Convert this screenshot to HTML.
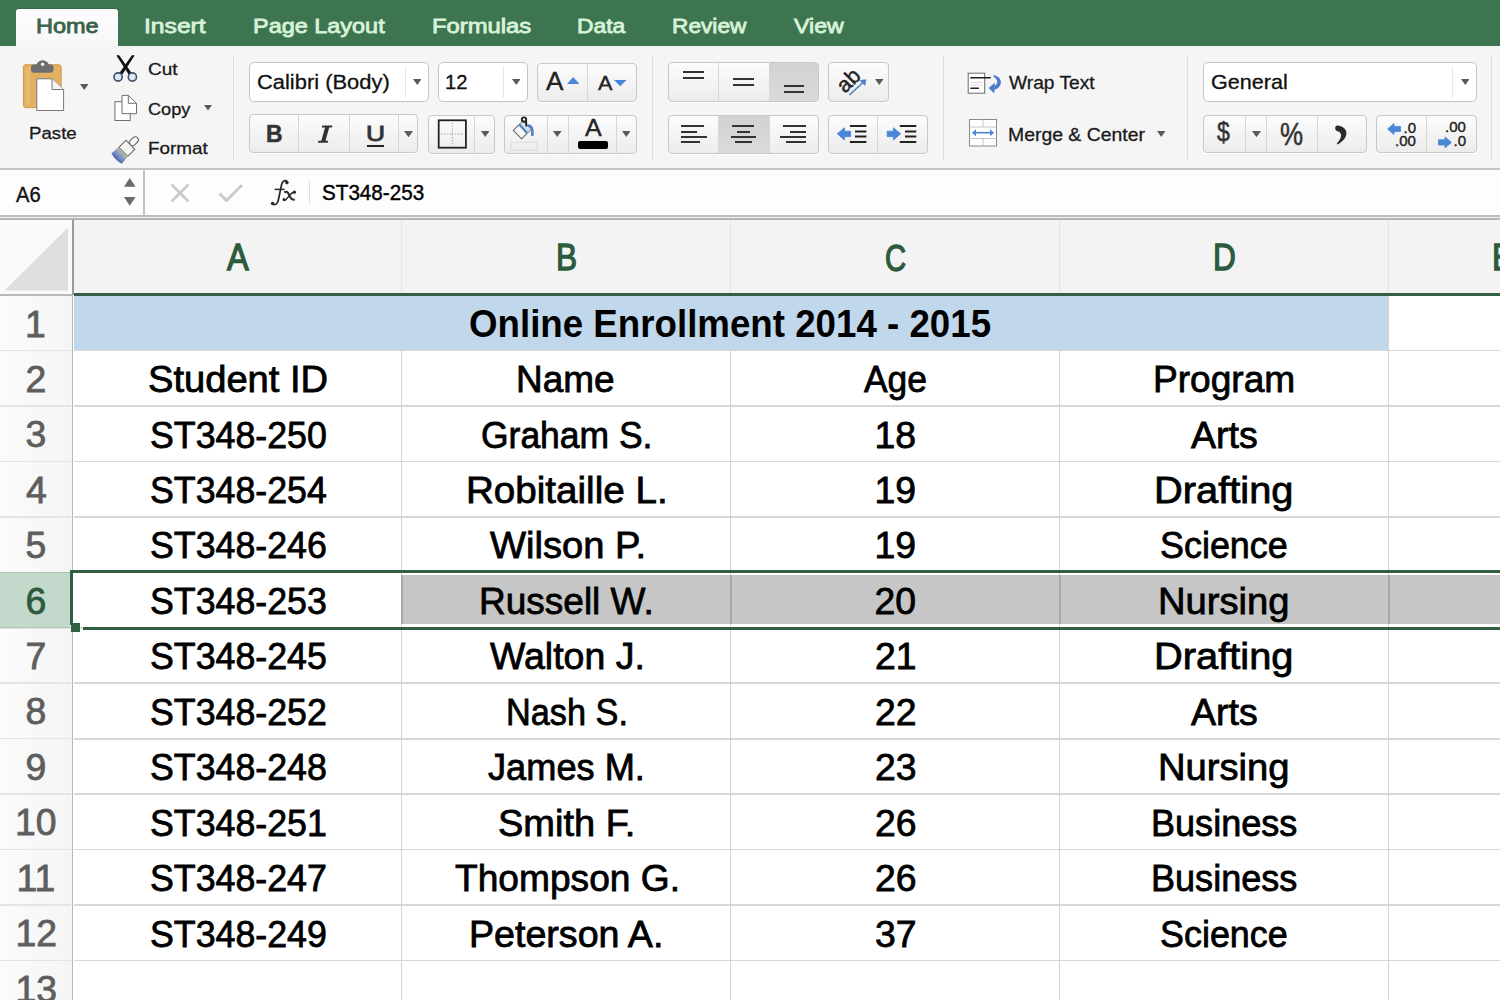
<!DOCTYPE html>
<html><head><meta charset="utf-8"><title>Excel</title>
<style>
html,body{margin:0;padding:0;}
body{width:1500px;height:1000px;position:relative;overflow:hidden;background:#fff;font-family:"Liberation Sans",sans-serif;}
.t{position:absolute;white-space:nowrap;line-height:1;transform-origin:0 0;}
</style></head><body>
<div style="position:absolute;left:0px;top:0px;width:1500px;height:46px;background:#3d7550"></div>
<div style="position:absolute;left:16px;top:8.5px;width:102px;height:39px;background:linear-gradient(#fefefe,#f6f6f6);border-radius:3px 3px 0 0;box-shadow:0 -0.5px 0 #2f5e3f"></div>
<div class="t" style="left:35.85px;top:16.35px;font-size:20.49px;font-weight:normal;color:#3a6148;transform:scaleX(1.1472);-webkit-text-stroke:0.8px #3a6148">Home</div>
<div class="t" style="left:144.10px;top:16.15px;font-size:20.49px;font-weight:normal;color:#d8f2d8;transform:scaleX(1.2039);-webkit-text-stroke:0.8px #d8f2d8">Insert</div>
<div class="t" style="left:253.36px;top:16.15px;font-size:20.49px;font-weight:normal;color:#d8f2d8;transform:scaleX(1.1447);-webkit-text-stroke:0.8px #d8f2d8">Page Layout</div>
<div class="t" style="left:431.84px;top:16.15px;font-size:20.49px;font-weight:normal;color:#d8f2d8;transform:scaleX(1.1619);-webkit-text-stroke:0.8px #d8f2d8">Formulas</div>
<div class="t" style="left:576.88px;top:16.15px;font-size:20.49px;font-weight:normal;color:#d8f2d8;transform:scaleX(1.1163);-webkit-text-stroke:0.8px #d8f2d8">Data</div>
<div class="t" style="left:672.39px;top:16.15px;font-size:20.49px;font-weight:normal;color:#d8f2d8;transform:scaleX(1.1075);-webkit-text-stroke:0.8px #d8f2d8">Review</div>
<div class="t" style="left:794.00px;top:16.15px;font-size:20.49px;font-weight:normal;color:#d8f2d8;transform:scaleX(1.1289);-webkit-text-stroke:0.8px #d8f2d8">View</div>
<div style="position:absolute;left:0px;top:46px;width:1500px;height:122px;background:#f5f5f5"></div>
<div style="position:absolute;left:0px;top:168px;width:1500px;height:2px;background:#c4c4c4"></div>
<div style="position:absolute;left:233.1px;top:56px;width:1px;height:104px;background:#dcdcdc"></div>
<div style="position:absolute;left:651.5px;top:56px;width:1px;height:104px;background:#dcdcdc"></div>
<div style="position:absolute;left:943px;top:56px;width:1px;height:104px;background:#dcdcdc"></div>
<div style="position:absolute;left:1187px;top:56px;width:1px;height:104px;background:#dcdcdc"></div>
<div style="position:absolute;left:1491.2px;top:56px;width:1px;height:104px;background:#dcdcdc"></div>
<svg style="position:absolute;left:20px;top:56px;" width="50" height="58" viewBox="0 0 50 58">
<rect x="3.4" y="8.7" width="37.8" height="43" rx="2.5" fill="#e3b062" stroke="#cf9c4e" stroke-width="1"/>
<rect x="6" y="11" width="4" height="38" fill="#ebbf78" opacity="0.6"/>
<path d="M16 11 a6.65 6.65 0 0 1 13.3 0 z" fill="#6c6c6c"/>
<rect x="11" y="8.5" width="22.5" height="8.2" rx="3" fill="#6d6d6d"/>
<circle cx="22.6" cy="8.2" r="1.7" fill="#f3f3f3"/>
<path d="M16.8 22.8 H32 L43.6 33.5 V54.5 H16.8 Z" fill="#fff" stroke="#777" stroke-width="1"/>
<path d="M32 22.8 V33.5 H43.6" fill="#f4f4f4" stroke="#777" stroke-width="1"/>
</svg>
<svg style="position:absolute;left:79.95px;top:84.3px;" width="8.5" height="6" viewBox="0 0 8.5 6"><polygon points="0,0 8.5,0 4.25,6" fill="#5a5a5a"/></svg>
<div class="t" style="left:28.52px;top:124.90px;font-size:17.30px;font-weight:normal;color:#1a1a1a;transform:scaleX(1.0791);-webkit-text-stroke:0.3px #1a1a1a">Paste</div>
<svg style="position:absolute;left:108px;top:52px;" width="32" height="32" viewBox="0 0 32 32">
<path d="M8.6 3.8 Q9.8 2.4 11.3 3.6 L23.8 21.2 L20.6 22.6 Z" fill="#111"/>
<path d="M26.4 3.8 Q25.2 2.4 23.7 3.6 L11.2 21.2 L14.4 22.6 Z" fill="#111"/>
<circle cx="10.1" cy="25" r="4.1" fill="#dde8f6" stroke="#3f5068" stroke-width="1.6"/>
<circle cx="24.4" cy="25" r="4.1" fill="#dde8f6" stroke="#3f5068" stroke-width="1.6"/>
</svg>
<div class="t" style="left:147.90px;top:60.90px;font-size:17.30px;font-weight:normal;color:#1a1a1a;transform:scaleX(1.1000);-webkit-text-stroke:0.3px #1a1a1a">Cut</div>
<svg style="position:absolute;left:110px;top:92px;" width="30" height="32" viewBox="0 0 30 32">
<rect x="4.9" y="9.7" width="15.3" height="18.8" fill="#fff" stroke="#6e6e6e" stroke-width="1"/>
<path d="M12 3.4 H18.3 L26.5 11.3 V21.7 H12 Z" fill="#fff" stroke="#6e6e6e" stroke-width="1"/>
<path d="M18.3 3.4 V11.3 H26.5" fill="none" stroke="#6e6e6e" stroke-width="1"/>
</svg>
<div class="t" style="left:147.95px;top:100.50px;font-size:17.30px;font-weight:normal;color:#1a1a1a;transform:scaleX(1.0500);-webkit-text-stroke:0.3px #1a1a1a">Copy</div>
<svg style="position:absolute;left:204px;top:105px;" width="8" height="5.5" viewBox="0 0 8 5.5"><polygon points="0,0 8,0 4,5.5" fill="#5a5a5a"/></svg>
<svg style="position:absolute;left:108px;top:132.5px;" width="34" height="34" viewBox="0 0 34 34">
<defs><linearGradient id="brushg" x1="0" y1="0" x2="0" y2="1">
<stop offset="0" stop-color="#b8bc9e"/><stop offset="0.5" stop-color="#8096c6"/><stop offset="1" stop-color="#4c63a8"/></linearGradient></defs>
<g transform="rotate(45 17 17)">
<rect x="14" y="-0.5" width="6.2" height="10" rx="3" fill="#f8f8f8" stroke="#6b6b6b" stroke-width="1.1"/>
<rect x="10.8" y="9.5" width="12.6" height="10" fill="#f4f4f4" stroke="#6b6b6b" stroke-width="1.1"/>
<path d="M10.4 19.8 H23.8 L24.4 29 Q17.1 31 9.8 29 Z" fill="url(#brushg)"/>
</g>
</svg>
<div class="t" style="left:147.91px;top:140.40px;font-size:17.30px;font-weight:normal;color:#1a1a1a;transform:scaleX(1.0926);-webkit-text-stroke:0.3px #1a1a1a">Format</div>
<div style="position:absolute;left:249px;top:61.7px;width:180px;height:40.3px;box-sizing:border-box;border:1px solid #c4c4c4;border-radius:5px;background:#fff"></div>
<div style="position:absolute;left:404.5px;top:65.7px;width:1px;height:32.3px;background:#e6e6e6"></div>
<div class="t" style="left:256.95px;top:71.55px;font-size:20.79px;font-weight:normal;color:#111;transform:scaleX(1.0540);-webkit-text-stroke:0.3px #111">Calibri (Body)</div>
<svg style="position:absolute;left:412.75px;top:79px;" width="8.5" height="6" viewBox="0 0 8.5 6"><polygon points="0,0 8.5,0 4.25,6" fill="#5a5a5a"/></svg>
<div style="position:absolute;left:437.6px;top:62px;width:90.9px;height:40px;box-sizing:border-box;border:1px solid #c4c4c4;border-radius:5px;background:#fff"></div>
<div style="position:absolute;left:502.5px;top:66px;width:1px;height:32px;background:#e6e6e6"></div>
<div class="t" style="left:445.00px;top:71.74px;font-size:20.20px;font-weight:normal;color:#111;transform:scaleX(1.0000);-webkit-text-stroke:0.3px #111">12</div>
<svg style="position:absolute;left:511.75px;top:79px;" width="8.5" height="6" viewBox="0 0 8.5 6"><polygon points="0,0 8.5,0 4.25,6" fill="#5a5a5a"/></svg>
<div style="position:absolute;left:536.5px;top:62.8px;width:100.3px;height:39.2px;box-sizing:border-box;border:1px solid #c8c8c8;border-radius:4px;background:linear-gradient(#fcfcfc,#ececec);box-shadow:0 1px 0 rgba(255,255,255,0.8)"></div>
<div style="position:absolute;left:586.5px;top:63.8px;width:1px;height:37.2px;background:#d6d6d6"></div>
<div class="t" style="left:546.00px;top:68.45px;font-size:26.16px;font-weight:normal;color:#222;transform:scaleX(1.0000);-webkit-text-stroke:0.4px #222">A</div>
<svg style="position:absolute;left:566.75px;top:77px;" width="12.5" height="7" viewBox="0 0 12.5 7"><polygon points="6.25,0 12.5,7 0,7" fill="#4a86d6"/></svg>
<div class="t" style="left:597.60px;top:71.66px;font-size:21.08px;font-weight:normal;color:#222;transform:scaleX(1.0286);-webkit-text-stroke:0.4px #222">A</div>
<svg style="position:absolute;left:613.75px;top:80.4px;" width="12.5" height="6.3" viewBox="0 0 12.5 6.3"><polygon points="0,0 12.5,0 6.25,6.3" fill="#4a86d6"/></svg>
<div style="position:absolute;left:249px;top:114px;width:169px;height:39px;box-sizing:border-box;border:1px solid #c8c8c8;border-radius:4px;background:linear-gradient(#fcfcfc,#ececec);box-shadow:0 1px 0 rgba(255,255,255,0.8)"></div>
<div style="position:absolute;left:298.2px;top:115px;width:1px;height:37px;background:#d6d6d6"></div>
<div style="position:absolute;left:348.5px;top:115px;width:1px;height:37px;background:#d6d6d6"></div>
<div style="position:absolute;left:397.5px;top:115px;width:1px;height:37px;background:#d6d6d6"></div>
<div class="t" style="left:265.73px;top:122.51px;font-size:23.55px;font-weight:bold;color:#333;transform:scaleX(0.9733);-webkit-text-stroke:0.5px #333">B</div>
<svg style="position:absolute;left:314px;top:122px;" width="22" height="24" viewBox="0 0 22 24"><path d="M8.2 3.6 H18.4 L17.9 5.5 H15.2 L11.5 18.8 H14.2 L13.7 20.7 H3.9 L4.4 18.8 H7.3 L11 5.5 H7.7 Z" fill="#333"/></svg>
<div class="t" style="left:365.54px;top:122.35px;font-size:22.67px;font-weight:normal;color:#333;transform:scaleX(1.1643);-webkit-text-stroke:0.9px #333">U</div>
<div style="position:absolute;left:366.5px;top:144.5px;width:17px;height:2px;background:#222"></div>
<svg style="position:absolute;left:404px;top:130.7px;" width="9" height="6.3" viewBox="0 0 9 6.3"><polygon points="0,0 9,0 4.5,6.3" fill="#5a5a5a"/></svg>
<div style="position:absolute;left:428px;top:114.8px;width:67px;height:39.2px;box-sizing:border-box;border:1px solid #c8c8c8;border-radius:4px;background:linear-gradient(#fcfcfc,#ececec);box-shadow:0 1px 0 rgba(255,255,255,0.8)"></div>
<div style="position:absolute;left:473.9px;top:115.8px;width:1px;height:37.2px;background:#d6d6d6"></div>
<svg style="position:absolute;left:436px;top:118px;" width="34" height="33" viewBox="0 0 34 33">
<rect x="2.7" y="2.3" width="27.2" height="27.4" fill="none" stroke="#222" stroke-width="1.8"/>
<path d="M16.3 5 V27.5 M5 16 H27.5" stroke="#999" stroke-width="1" stroke-dasharray="1.2 1.6"/>
</svg>
<svg style="position:absolute;left:480.75px;top:131px;" width="8.5" height="6" viewBox="0 0 8.5 6"><polygon points="0,0 8.5,0 4.25,6" fill="#5a5a5a"/></svg>
<div style="position:absolute;left:504px;top:114.8px;width:132.8px;height:39.2px;box-sizing:border-box;border:1px solid #c8c8c8;border-radius:4px;background:linear-gradient(#fcfcfc,#ececec);box-shadow:0 1px 0 rgba(255,255,255,0.8)"></div>
<div style="position:absolute;left:546.5px;top:115.8px;width:1px;height:37.2px;background:#d6d6d6"></div>
<div style="position:absolute;left:567.5px;top:115.8px;width:1px;height:37.2px;background:#d6d6d6"></div>
<div style="position:absolute;left:615.5px;top:115.8px;width:1px;height:37.2px;background:#d6d6d6"></div>
<svg style="position:absolute;left:504px;top:112px;" width="40" height="42" viewBox="0 0 40 42">
<path d="M9.3 18.3 L19 8.8 L26.7 17.6 L17.6 26.9 Z" fill="#fafafa" stroke="#6a6a6a" stroke-width="1.1" stroke-linejoin="round"/>
<path d="M15.5 12.8 L19 8.8 L26.7 17.6 L23 21 Z" fill="#cfe0f3"/>
<path d="M15.5 12.8 L23 21" stroke="#4f7fc0" stroke-width="2.2"/>
<circle cx="20" cy="7.6" r="2.2" fill="none" stroke="#222" stroke-width="1.9"/>
<path d="M22 8.5 L22.4 14.5" stroke="#222" stroke-width="2"/>
<path d="M23.8 13.5 Q29.5 13.5 28.3 23.8" fill="none" stroke="#4f7fc0" stroke-width="2.6"/>
<rect x="7" y="30.2" width="26" height="8" fill="none" stroke="#dadada" stroke-width="1"/>
</svg>
<svg style="position:absolute;left:553.35px;top:131px;" width="8.5" height="6" viewBox="0 0 8.5 6"><polygon points="0,0 8.5,0 4.25,6" fill="#5a5a5a"/></svg>
<div class="t" style="left:585.00px;top:116.37px;font-size:24.13px;font-weight:normal;color:#222;transform:scaleX(1.0375);-webkit-text-stroke:0.4px #222">A</div>
<div style="position:absolute;left:577.6px;top:141px;width:30.4px;height:8px;background:#000;border-radius:2px"></div>
<svg style="position:absolute;left:621.75px;top:131px;" width="8.5" height="6" viewBox="0 0 8.5 6"><polygon points="0,0 8.5,0 4.25,6" fill="#5a5a5a"/></svg>
<div style="position:absolute;left:668px;top:62px;width:151px;height:40px;box-sizing:border-box;border:1px solid #c8c8c8;border-radius:4px;background:linear-gradient(#fcfcfc,#ececec);box-shadow:0 1px 0 rgba(255,255,255,0.8)"></div>
<div style="position:absolute;left:769px;top:63px;width:49px;height:38px;background:linear-gradient(#d2d2d2,#dadada);border-radius:0 3px 3px 0"></div>
<div style="position:absolute;left:717.5px;top:63px;width:1px;height:38px;background:#d6d6d6"></div>
<div style="position:absolute;left:683px;top:71.3px;width:20.6px;height:2px;background:#333"></div>
<div style="position:absolute;left:683px;top:76.9px;width:20.6px;height:2px;background:#333"></div>
<div style="position:absolute;left:733px;top:78.4px;width:20.6px;height:2px;background:#333"></div>
<div style="position:absolute;left:733px;top:83.8px;width:20.6px;height:2px;background:#333"></div>
<div style="position:absolute;left:783.6px;top:85.3px;width:20.4px;height:2px;background:#333"></div>
<div style="position:absolute;left:783.6px;top:90.6px;width:20.4px;height:2px;background:#333"></div>
<div style="position:absolute;left:827.7px;top:62px;width:61.8px;height:40px;box-sizing:border-box;border:1px solid #c8c8c8;border-radius:4px;background:linear-gradient(#fcfcfc,#ececec);box-shadow:0 1px 0 rgba(255,255,255,0.8)"></div>
<svg style="position:absolute;left:830px;top:62px;" width="50" height="40" viewBox="0 0 50 40">
<text x="0" y="0" transform="translate(15 32) rotate(-45)" font-family="Liberation Sans" font-size="21.5" fill="#222" stroke="#222" stroke-width="0.5">ab</text>
<path d="M19.5 33 L34 19.5" stroke="#4f7fc0" stroke-width="1.6"/>
<path d="M36.2 17.3 L29.5 18.2 L35.2 23.9 Z" fill="#4f7fc0"/>
</svg>
<svg style="position:absolute;left:875.25px;top:79px;" width="8.5" height="6" viewBox="0 0 8.5 6"><polygon points="0,0 8.5,0 4.25,6" fill="#5a5a5a"/></svg>
<div style="position:absolute;left:668px;top:114.8px;width:151px;height:39.6px;box-sizing:border-box;border:1px solid #c8c8c8;border-radius:4px;background:linear-gradient(#fcfcfc,#ececec);box-shadow:0 1px 0 rgba(255,255,255,0.8)"></div>
<div style="position:absolute;left:718px;top:115.8px;width:51px;height:37.6px;background:linear-gradient(#d2d2d2,#dadada);border-radius:0"></div>
<div style="position:absolute;left:768.5px;top:115.8px;width:1px;height:37.6px;background:#d6d6d6"></div>
<div style="position:absolute;left:681px;top:125.4px;width:22.6px;height:2px;background:#333"></div>
<div style="position:absolute;left:681px;top:130.7px;width:15.8px;height:2px;background:#333"></div>
<div style="position:absolute;left:681px;top:135.7px;width:26.3px;height:2px;background:#333"></div>
<div style="position:absolute;left:681px;top:141px;width:19.4px;height:2px;background:#333"></div>
<div style="position:absolute;left:732.3px;top:125.4px;width:22px;height:2px;background:#333"></div>
<div style="position:absolute;left:736.8px;top:130.7px;width:13px;height:2px;background:#333"></div>
<div style="position:absolute;left:731.05px;top:135.7px;width:24.5px;height:2px;background:#333"></div>
<div style="position:absolute;left:734.8px;top:141px;width:17px;height:2px;background:#333"></div>
<div style="position:absolute;left:783.2px;top:125.4px;width:22.6px;height:2px;background:#333"></div>
<div style="position:absolute;left:790px;top:130.7px;width:15.8px;height:2px;background:#333"></div>
<div style="position:absolute;left:779.5px;top:135.7px;width:26.3px;height:2px;background:#333"></div>
<div style="position:absolute;left:786.4px;top:141px;width:19.4px;height:2px;background:#333"></div>
<div style="position:absolute;left:827.7px;top:114.8px;width:99.9px;height:39.6px;box-sizing:border-box;border:1px solid #c8c8c8;border-radius:4px;background:linear-gradient(#fcfcfc,#ececec);box-shadow:0 1px 0 rgba(255,255,255,0.8)"></div>
<div style="position:absolute;left:877.2px;top:115.8px;width:1px;height:37.6px;background:#d6d6d6"></div>
<svg style="position:absolute;left:834px;top:120px;" width="90" height="30" viewBox="0 0 90 30">
<path d="M3.3 13.8 L10.4 7.8 V11.2 H16.6 V16.6 H10.4 V20 Z" fill="#4a86d6" stroke="#4a86d6" stroke-width="0.9" stroke-linejoin="round"/>
<path d="M15.9 6.1 H32.4 M21 11.4 H32.4 M21 16.6 H32.4 M15.9 21.9 H32.4" stroke="#222" stroke-width="2"/>
<path d="M66.7 13.8 L59.4 7.8 V11.2 H53.2 V16.6 H59.4 V20 Z" fill="#4a86d6" stroke="#4a86d6" stroke-width="0.9" stroke-linejoin="round"/>
<path d="M65.8 6.1 H82.3 M71 11.4 H82.3 M71 16.6 H82.3 M65.8 21.9 H82.3" stroke="#222" stroke-width="2"/>
</svg>
<svg style="position:absolute;left:965px;top:70px;" width="40" height="26" viewBox="0 0 40 26">
<rect x="3.2" y="3.2" width="16.5" height="20" fill="#fff" stroke="#6a6a6a" stroke-width="1"/>
<path d="M5.3 7.8 H25.8 M5.3 18.3 H13.9" stroke="#222" stroke-width="1.6"/>
<path d="M5.3 12.5 H18 M5.3 15 H18" stroke="#dcdcdc" stroke-width="1"/>
<path d="M28.8 5 C38 7.5 38.5 16 29.5 20.2 L29.3 16.2 C33.8 13.5 33 9 28.6 7 Z" fill="#4a7cc8"/>
<path d="M23.7 18 L29.8 12.8 L29.3 23.6 Z" fill="#4a7cc8"/>
</svg>
<div class="t" style="left:1009.30px;top:75.14px;font-size:17.73px;font-weight:normal;color:#1a1a1a;transform:scaleX(1.0823);-webkit-text-stroke:0.3px #1a1a1a">Wrap Text</div>
<svg style="position:absolute;left:966px;top:116px;" width="34" height="33" viewBox="0 0 34 33">
<rect x="3.5" y="3.5" width="27" height="26.5" fill="#fff" stroke="#8a8a8a" stroke-width="1"/>
<path d="M3.5 11 H30.5 M3.5 22.5 H30.5 M17 3.5 V11 M17 22.5 V30" stroke="#c4c4c4" stroke-width="1"/>
<path d="M7.5 16.7 H26.5" stroke="#4a86d6" stroke-width="1.6"/>
<path d="M6 16.7 L10 13.2 V20.2 Z M28 16.7 L24 13.2 V20.2 Z" fill="#4a86d6"/>
</svg>
<div class="t" style="left:1008.25px;top:126.12px;font-size:18.46px;font-weight:normal;color:#1a1a1a;transform:scaleX(1.0519);-webkit-text-stroke:0.3px #1a1a1a">Merge &amp; Center</div>
<svg style="position:absolute;left:1157.45px;top:130.6px;" width="8.5" height="6" viewBox="0 0 8.5 6"><polygon points="0,0 8.5,0 4.25,6" fill="#5a5a5a"/></svg>
<div style="position:absolute;left:1202.8px;top:62px;width:274.2px;height:40px;box-sizing:border-box;border:1px solid #c4c4c4;border-radius:5px;background:#fff"></div>
<div style="position:absolute;left:1452px;top:66px;width:1px;height:32px;background:#e6e6e6"></div>
<div class="t" style="left:1210.62px;top:71.77px;font-size:20.06px;font-weight:normal;color:#111;transform:scaleX(1.0768);-webkit-text-stroke:0.3px #111">General</div>
<svg style="position:absolute;left:1460.75px;top:79px;" width="8.5" height="6" viewBox="0 0 8.5 6"><polygon points="0,0 8.5,0 4.25,6" fill="#5a5a5a"/></svg>
<div style="position:absolute;left:1202.8px;top:114.5px;width:164.5px;height:38.8px;box-sizing:border-box;border:1px solid #c8c8c8;border-radius:4px;background:linear-gradient(#fcfcfc,#ececec);box-shadow:0 1px 0 rgba(255,255,255,0.8)"></div>
<div style="position:absolute;left:1245.3px;top:115.5px;width:1px;height:36.8px;background:#d6d6d6"></div>
<div style="position:absolute;left:1266.4px;top:115.5px;width:1px;height:36.8px;background:#d6d6d6"></div>
<div style="position:absolute;left:1317.2px;top:115.5px;width:1px;height:36.8px;background:#d6d6d6"></div>
<div class="t" style="left:1216.50px;top:119.36px;font-size:27.04px;font-weight:normal;color:#333;transform:scaleX(0.8533);-webkit-text-stroke:0.5px #333">$</div>
<svg style="position:absolute;left:1252.1px;top:130.6px;" width="9" height="6.2" viewBox="0 0 9 6.2"><polygon points="0,0 9,0 4.5,6.2" fill="#5a5a5a"/></svg>
<div class="t" style="left:1280.15px;top:118.78px;font-size:30.67px;font-weight:normal;color:#333;transform:scaleX(0.8462);-webkit-text-stroke:0.5px #333">%</div>
<svg style="position:absolute;left:1330px;top:120px;" width="24" height="28" viewBox="0 0 24 28"><path d="M7.5 5.5 C17.5 6.5 21 16.5 8.2 24.2 C7.3 24.6 6.6 23.8 7.2 23 C12.5 17.5 12.2 12 7.5 11.2 C4.6 10.6 4.2 5.6 7.5 5.5 Z" fill="#2a2a2a"/></svg>
<div style="position:absolute;left:1376px;top:114.5px;width:100.8px;height:38.8px;box-sizing:border-box;border:1px solid #c8c8c8;border-radius:4px;background:linear-gradient(#fcfcfc,#ececec);box-shadow:0 1px 0 rgba(255,255,255,0.8)"></div>
<div style="position:absolute;left:1426.1px;top:115.5px;width:1px;height:36.8px;background:#d6d6d6"></div>
<svg style="position:absolute;left:1384px;top:120px;" width="90" height="30" viewBox="0 0 90 30">
<path d="M3.6 9 L10 3.4 V6.4 H16.5 V11.6 H10 V14.6 Z" fill="#4a86d6" stroke="#4a86d6" stroke-width="0.8" stroke-linejoin="round"/>
<path d="M67.4 22.4 L61 16.8 V19.8 H54.5 V25 H61 V28 Z" fill="#4a86d6" stroke="#4a86d6" stroke-width="0.8" stroke-linejoin="round"/>
</svg>
<div class="t" style="left:1403.5px;top:119.5px;font-size:15px;color:#222;letter-spacing:0px;-webkit-text-stroke:0.4px #222">.0</div>
<div class="t" style="left:1395px;top:132.5px;font-size:15px;color:#222;letter-spacing:0px;-webkit-text-stroke:0.4px #222">.00</div>
<div class="t" style="left:1445px;top:119px;font-size:15px;color:#222;letter-spacing:0px;-webkit-text-stroke:0.4px #222">.00</div>
<div class="t" style="left:1453.5px;top:132.5px;font-size:15px;color:#222;letter-spacing:0px;-webkit-text-stroke:0.4px #222">.0</div>
<div style="position:absolute;left:0px;top:170px;width:1500px;height:45px;background:#fdfdfd"></div>
<div style="position:absolute;left:0px;top:215px;width:1500px;height:1.5px;background:#bdbdbd"></div>
<div style="position:absolute;left:0px;top:216.5px;width:1500px;height:1.5px;background:#f0f0f0"></div>
<div style="position:absolute;left:0px;top:218px;width:1500px;height:1.5px;background:#b5b5b5"></div>
<div style="position:absolute;left:143px;top:170px;width:2px;height:45px;background:#c2c2c2"></div>
<div class="t" style="left:15.50px;top:183.67px;font-size:22.24px;font-weight:normal;color:#111;transform:scaleX(0.9074);-webkit-text-stroke:0.4px #111">A6</div>
<svg style="position:absolute;left:124.25px;top:178px;" width="11.5" height="8.7" viewBox="0 0 11.5 8.7"><polygon points="5.75,0 11.5,8.7 0,8.7" fill="#6a6a6a"/></svg>
<svg style="position:absolute;left:124.25px;top:197.3px;" width="11.5" height="8.7" viewBox="0 0 11.5 8.7"><polygon points="0,0 11.5,0 5.75,8.7" fill="#6a6a6a"/></svg>
<svg style="position:absolute;left:168px;top:181px;" width="24" height="24" viewBox="0 0 24 24"><path d="M3.5 3.5 L20.5 20.5 M20.5 3.5 L3.5 20.5" stroke="#c9c9c9" stroke-width="2.6"/></svg>
<svg style="position:absolute;left:216px;top:181px;" width="30" height="24" viewBox="0 0 30 24"><path d="M3.5 12.5 L10.5 19.5 L26 4" fill="none" stroke="#c9c9c9" stroke-width="2.8"/></svg>
<svg style="position:absolute;left:266px;top:176px;" width="34" height="34" viewBox="0 0 34 34">
<path d="M21.2 5.6 C19.6 4 16.6 4.2 15.6 8.6 L12.2 24.6 C11.3 28.6 8.8 29.4 6.8 27.9" fill="none" stroke="#2a2a2a" stroke-width="1.8"/>
<circle cx="20.9" cy="6.6" r="1.8" fill="#2a2a2a"/>
<circle cx="6.6" cy="27.5" r="1.8" fill="#2a2a2a"/>
<path d="M8.6 13.4 H18.6" stroke="#2a2a2a" stroke-width="1.5"/>
<path d="M18.3 16.6 C20.3 14.8 21.8 15.6 23.2 19.2 C24.6 22.8 26.2 24.4 28.8 23.4" fill="none" stroke="#2a2a2a" stroke-width="2"/>
<path d="M28.4 16 C25.4 16.4 22.6 20.4 20.4 23.2 C19.4 24.4 18.2 24.6 17.6 24" fill="none" stroke="#2a2a2a" stroke-width="1.4"/>
<circle cx="28.4" cy="16.2" r="1.6" fill="#2a2a2a"/>
<circle cx="18" cy="23.6" r="1.5" fill="#2a2a2a"/>
</svg>
<div style="position:absolute;left:309px;top:181px;width:1px;height:24px;background:#dedede"></div>
<div class="t" style="left:322.06px;top:181.69px;font-size:22.09px;font-weight:normal;color:#000;transform:scaleX(0.9352);-webkit-text-stroke:0.4px #000">ST348-253</div>
<div style="position:absolute;left:0px;top:219.5px;width:1500px;height:780.5px;background:#fff"></div>
<div style="position:absolute;left:73.5px;top:219.5px;width:1500px;height:73.5px;background:#f3f3f3"></div>
<div style="position:absolute;left:0px;top:219.5px;width:71.5px;height:75.5px;background:#fafafa"></div>
<svg style="position:absolute;left:0px;top:220px;" width="72" height="75" viewBox="0 0 72 75"><polygon points="4.5,70.5 68,7.5 68,70.5" fill="#dedede"/></svg>
<div style="position:absolute;left:0px;top:295px;width:71.5px;height:705px;background:linear-gradient(to right,#fbfbfb,#f5f5f5)"></div>
<div style="position:absolute;left:73.5px;top:296px;width:1315px;height:54.5px;background:#c1d7eb"></div>
<div style="position:absolute;left:402.5px;top:575.2px;width:1097.5px;height:49.3px;background:#c6c6c6"></div>
<div style="position:absolute;left:0px;top:349.75px;width:70.5px;height:1.5px;background:#e4e4e4"></div>
<div style="position:absolute;left:73.5px;top:349.6px;width:1500px;height:1.8px;background:#d8d8d8"></div>
<div style="position:absolute;left:0px;top:405.2px;width:70.5px;height:1.5px;background:#e4e4e4"></div>
<div style="position:absolute;left:73.5px;top:405.05px;width:1500px;height:1.8px;background:#d8d8d8"></div>
<div style="position:absolute;left:0px;top:460.65px;width:70.5px;height:1.5px;background:#e4e4e4"></div>
<div style="position:absolute;left:73.5px;top:460.5px;width:1500px;height:1.8px;background:#d8d8d8"></div>
<div style="position:absolute;left:0px;top:516.1px;width:70.5px;height:1.5px;background:#e4e4e4"></div>
<div style="position:absolute;left:73.5px;top:515.95px;width:1500px;height:1.8px;background:#d8d8d8"></div>
<div style="position:absolute;left:0px;top:571.55px;width:70.5px;height:1.5px;background:#e4e4e4"></div>
<div style="position:absolute;left:73.5px;top:571.4px;width:1500px;height:1.8px;background:#d8d8d8"></div>
<div style="position:absolute;left:0px;top:627px;width:70.5px;height:1.5px;background:#e4e4e4"></div>
<div style="position:absolute;left:73.5px;top:626.85px;width:1500px;height:1.8px;background:#d8d8d8"></div>
<div style="position:absolute;left:0px;top:682.45px;width:70.5px;height:1.5px;background:#e4e4e4"></div>
<div style="position:absolute;left:73.5px;top:682.3px;width:1500px;height:1.8px;background:#d8d8d8"></div>
<div style="position:absolute;left:0px;top:737.9px;width:70.5px;height:1.5px;background:#e4e4e4"></div>
<div style="position:absolute;left:73.5px;top:737.75px;width:1500px;height:1.8px;background:#d8d8d8"></div>
<div style="position:absolute;left:0px;top:793.35px;width:70.5px;height:1.5px;background:#e4e4e4"></div>
<div style="position:absolute;left:73.5px;top:793.2px;width:1500px;height:1.8px;background:#d8d8d8"></div>
<div style="position:absolute;left:0px;top:848.8px;width:70.5px;height:1.5px;background:#e4e4e4"></div>
<div style="position:absolute;left:73.5px;top:848.65px;width:1500px;height:1.8px;background:#d8d8d8"></div>
<div style="position:absolute;left:0px;top:904.25px;width:70.5px;height:1.5px;background:#e4e4e4"></div>
<div style="position:absolute;left:73.5px;top:904.1px;width:1500px;height:1.8px;background:#d8d8d8"></div>
<div style="position:absolute;left:0px;top:959.7px;width:70.5px;height:1.5px;background:#e4e4e4"></div>
<div style="position:absolute;left:73.5px;top:959.55px;width:1500px;height:1.8px;background:#d8d8d8"></div>
<div style="position:absolute;left:0px;top:1015.15px;width:70.5px;height:1.5px;background:#e4e4e4"></div>
<div style="position:absolute;left:73.5px;top:1015px;width:1500px;height:1.8px;background:#d8d8d8"></div>
<div style="position:absolute;left:0px;top:294px;width:72px;height:1.5px;background:#b8b8b8"></div>
<div style="position:absolute;left:401px;top:219.5px;width:1px;height:73.5px;background:#e4e4e4"></div>
<div style="position:absolute;left:400.6px;top:350px;width:1.8px;height:650px;background:#d4d4d4"></div>
<div style="position:absolute;left:400.5px;top:575.2px;width:2px;height:49.3px;background:#a8a8a8"></div>
<div style="position:absolute;left:730px;top:219.5px;width:1px;height:73.5px;background:#e4e4e4"></div>
<div style="position:absolute;left:729.6px;top:350px;width:1.8px;height:650px;background:#d4d4d4"></div>
<div style="position:absolute;left:729.5px;top:575.2px;width:2px;height:49.3px;background:#a8a8a8"></div>
<div style="position:absolute;left:1059px;top:219.5px;width:1px;height:73.5px;background:#e4e4e4"></div>
<div style="position:absolute;left:1058.6px;top:350px;width:1.8px;height:650px;background:#d4d4d4"></div>
<div style="position:absolute;left:1058.5px;top:575.2px;width:2px;height:49.3px;background:#a8a8a8"></div>
<div style="position:absolute;left:1388px;top:219.5px;width:1px;height:73.5px;background:#e4e4e4"></div>
<div style="position:absolute;left:1387.6px;top:295.5px;width:1.8px;height:704.5px;background:#d4d4d4"></div>
<div style="position:absolute;left:1387.5px;top:575.2px;width:2px;height:49.3px;background:#a8a8a8"></div>
<div style="position:absolute;left:71.5px;top:219.5px;width:2px;height:75.5px;background:#9a9a9a"></div>
<div style="position:absolute;left:71.75px;top:295px;width:1.5px;height:705px;background:#b8b8b8"></div>
<div style="position:absolute;left:0px;top:572px;width:70px;height:55px;background:#c2d9cb"></div>
<div style="position:absolute;left:0px;top:571.5px;width:70px;height:1px;background:#a9c7af"></div>
<div style="position:absolute;left:0px;top:626.5px;width:70px;height:1px;background:#a9c7af"></div>
<div style="position:absolute;left:73.5px;top:293px;width:1500px;height:2.6px;background:#335f44"></div>
<div style="position:absolute;left:73px;top:570px;width:1500px;height:3px;background:#30603f"></div>
<div style="position:absolute;left:70px;top:570px;width:3px;height:55px;background:#30603f"></div>
<div style="position:absolute;left:82.5px;top:627px;width:1500px;height:3px;background:#30603f"></div>
<div style="position:absolute;left:71px;top:623px;width:9px;height:8.5px;background:#30603f"></div>
<div class="t" style="left:227.09px;top:240.06px;font-size:36.48px;font-weight:normal;color:#2c5a3c;transform:scaleX(0.8923);-webkit-text-stroke:1.3px #2c5a3c">A</div>
<div class="t" style="left:556.29px;top:239.79px;font-size:36.92px;font-weight:normal;color:#2c5a3c;transform:scaleX(0.8571);-webkit-text-stroke:1.3px #2c5a3c">B</div>
<div class="t" style="left:884.51px;top:239.77px;font-size:37.06px;font-weight:normal;color:#2c5a3c;transform:scaleX(0.7880);-webkit-text-stroke:1.3px #2c5a3c">C</div>
<div class="t" style="left:1212.58px;top:240.04px;font-size:36.63px;font-weight:normal;color:#2c5a3c;transform:scaleX(0.8625);-webkit-text-stroke:1.3px #2c5a3c">D</div>
<div class="t" style="left:1492.23px;top:240.06px;font-size:36.48px;font-weight:normal;color:#2c5a3c;transform:scaleX(0.8864);-webkit-text-stroke:1.3px #2c5a3c">E</div>
<div class="t" style="left:25.00px;top:305.77px;font-size:37.36px;font-weight:normal;color:#5e5e5e;transform:scaleX(1.0000);-webkit-text-stroke:0.8px #5e5e5e">1</div>
<div class="t" style="left:25.50px;top:360.77px;font-size:37.36px;font-weight:normal;color:#5e5e5e;transform:scaleX(1.0000);-webkit-text-stroke:0.8px #5e5e5e">2</div>
<div class="t" style="left:25.50px;top:416.22px;font-size:37.36px;font-weight:normal;color:#5e5e5e;transform:scaleX(1.0000);-webkit-text-stroke:0.8px #5e5e5e">3</div>
<div class="t" style="left:26.00px;top:471.67px;font-size:37.36px;font-weight:normal;color:#5e5e5e;transform:scaleX(1.0000);-webkit-text-stroke:0.8px #5e5e5e">4</div>
<div class="t" style="left:25.50px;top:527.12px;font-size:37.36px;font-weight:normal;color:#5e5e5e;transform:scaleX(1.0000);-webkit-text-stroke:0.8px #5e5e5e">5</div>
<div class="t" style="left:25.50px;top:582.57px;font-size:37.36px;font-weight:normal;color:#2c5a3c;transform:scaleX(1.0000);-webkit-text-stroke:0.8px #2c5a3c">6</div>
<div class="t" style="left:25.50px;top:638.02px;font-size:37.36px;font-weight:normal;color:#5e5e5e;transform:scaleX(1.0000);-webkit-text-stroke:0.8px #5e5e5e">7</div>
<div class="t" style="left:25.50px;top:693.47px;font-size:37.36px;font-weight:normal;color:#5e5e5e;transform:scaleX(1.0000);-webkit-text-stroke:0.8px #5e5e5e">8</div>
<div class="t" style="left:25.50px;top:748.92px;font-size:37.36px;font-weight:normal;color:#5e5e5e;transform:scaleX(1.0000);-webkit-text-stroke:0.8px #5e5e5e">9</div>
<div class="t" style="left:15.10px;top:804.37px;font-size:37.36px;font-weight:normal;color:#5e5e5e;transform:scaleX(1.0000);-webkit-text-stroke:0.8px #5e5e5e">10</div>
<div class="t" style="left:16.60px;top:859.82px;font-size:37.36px;font-weight:normal;color:#5e5e5e;transform:scaleX(1.0000);-webkit-text-stroke:0.8px #5e5e5e">11</div>
<div class="t" style="left:15.60px;top:915.27px;font-size:37.36px;font-weight:normal;color:#5e5e5e;transform:scaleX(1.0000);-webkit-text-stroke:0.8px #5e5e5e">12</div>
<div class="t" style="left:15.60px;top:970.72px;font-size:37.36px;font-weight:normal;color:#5e5e5e;transform:scaleX(1.0000);-webkit-text-stroke:0.8px #5e5e5e">13</div>
<div class="t" style="left:147.98px;top:361.07px;font-size:37.36px;font-weight:normal;color:#000;transform:scaleX(1.0201);-webkit-text-stroke:0.8px #000">Student ID</div>
<div class="t" style="left:516.03px;top:361.07px;font-size:37.36px;font-weight:normal;color:#000;transform:scaleX(0.9896);-webkit-text-stroke:0.8px #000">Name</div>
<div class="t" style="left:863.50px;top:361.07px;font-size:37.36px;font-weight:normal;color:#000;transform:scaleX(0.9462);-webkit-text-stroke:0.8px #000">Age</div>
<div class="t" style="left:1152.72px;top:361.07px;font-size:37.36px;font-weight:normal;color:#000;transform:scaleX(0.9928);-webkit-text-stroke:0.8px #000">Program</div>
<div class="t" style="left:149.64px;top:416.52px;font-size:37.36px;font-weight:normal;color:#000;transform:scaleX(0.9568);-webkit-text-stroke:0.8px #000">ST348-250</div>
<div class="t" style="left:481.05px;top:416.52px;font-size:37.36px;font-weight:normal;color:#000;transform:scaleX(0.9492);-webkit-text-stroke:0.8px #000">Graham S.</div>
<div class="t" style="left:874.50px;top:416.52px;font-size:37.36px;font-weight:normal;color:#000;transform:scaleX(1.0000);-webkit-text-stroke:0.8px #000">18</div>
<div class="t" style="left:1191.00px;top:416.52px;font-size:37.36px;font-weight:normal;color:#000;transform:scaleX(1.0045);-webkit-text-stroke:0.8px #000">Arts</div>
<div class="t" style="left:149.64px;top:471.97px;font-size:37.36px;font-weight:normal;color:#000;transform:scaleX(0.9568);-webkit-text-stroke:0.8px #000">ST348-254</div>
<div class="t" style="left:465.70px;top:471.97px;font-size:37.36px;font-weight:normal;color:#000;transform:scaleX(1.0328);-webkit-text-stroke:0.8px #000">Robitaille L.</div>
<div class="t" style="left:874.50px;top:471.97px;font-size:37.36px;font-weight:normal;color:#000;transform:scaleX(1.0000);-webkit-text-stroke:0.8px #000">19</div>
<div class="t" style="left:1154.20px;top:471.97px;font-size:37.36px;font-weight:normal;color:#000;transform:scaleX(1.0659);-webkit-text-stroke:0.8px #000">Drafting</div>
<div class="t" style="left:149.64px;top:527.42px;font-size:37.36px;font-weight:normal;color:#000;transform:scaleX(0.9568);-webkit-text-stroke:0.8px #000">ST348-246</div>
<div class="t" style="left:489.80px;top:527.42px;font-size:37.36px;font-weight:normal;color:#000;transform:scaleX(1.0213);-webkit-text-stroke:0.8px #000">Wilson P.</div>
<div class="t" style="left:874.50px;top:527.42px;font-size:37.36px;font-weight:normal;color:#000;transform:scaleX(1.0000);-webkit-text-stroke:0.8px #000">19</div>
<div class="t" style="left:1160.34px;top:527.42px;font-size:37.36px;font-weight:normal;color:#000;transform:scaleX(0.9611);-webkit-text-stroke:0.8px #000">Science</div>
<div class="t" style="left:149.64px;top:582.87px;font-size:37.36px;font-weight:normal;color:#000;transform:scaleX(0.9568);-webkit-text-stroke:0.8px #000">ST348-253</div>
<div class="t" style="left:479.03px;top:582.87px;font-size:37.36px;font-weight:normal;color:#000;transform:scaleX(0.9906);-webkit-text-stroke:0.8px #000">Russell W.</div>
<div class="t" style="left:874.50px;top:582.87px;font-size:37.36px;font-weight:normal;color:#000;transform:scaleX(1.0000);-webkit-text-stroke:0.8px #000">20</div>
<div class="t" style="left:1158.23px;top:582.87px;font-size:37.36px;font-weight:normal;color:#000;transform:scaleX(1.0218);-webkit-text-stroke:0.8px #000">Nursing</div>
<div class="t" style="left:149.64px;top:638.32px;font-size:37.36px;font-weight:normal;color:#000;transform:scaleX(0.9568);-webkit-text-stroke:0.8px #000">ST348-245</div>
<div class="t" style="left:489.50px;top:638.32px;font-size:37.36px;font-weight:normal;color:#000;transform:scaleX(1.0033);-webkit-text-stroke:0.8px #000">Walton J.</div>
<div class="t" style="left:875.00px;top:638.32px;font-size:37.36px;font-weight:normal;color:#000;transform:scaleX(1.0000);-webkit-text-stroke:0.8px #000">21</div>
<div class="t" style="left:1154.20px;top:638.32px;font-size:37.36px;font-weight:normal;color:#000;transform:scaleX(1.0659);-webkit-text-stroke:0.8px #000">Drafting</div>
<div class="t" style="left:149.64px;top:693.77px;font-size:37.36px;font-weight:normal;color:#000;transform:scaleX(0.9568);-webkit-text-stroke:0.8px #000">ST348-252</div>
<div class="t" style="left:505.55px;top:693.77px;font-size:37.36px;font-weight:normal;color:#000;transform:scaleX(0.9173);-webkit-text-stroke:0.8px #000">Nash S.</div>
<div class="t" style="left:875.00px;top:693.77px;font-size:37.36px;font-weight:normal;color:#000;transform:scaleX(1.0000);-webkit-text-stroke:0.8px #000">22</div>
<div class="t" style="left:1191.00px;top:693.77px;font-size:37.36px;font-weight:normal;color:#000;transform:scaleX(1.0045);-webkit-text-stroke:0.8px #000">Arts</div>
<div class="t" style="left:149.64px;top:749.22px;font-size:37.36px;font-weight:normal;color:#000;transform:scaleX(0.9568);-webkit-text-stroke:0.8px #000">ST348-248</div>
<div class="t" style="left:487.90px;top:749.22px;font-size:37.36px;font-weight:normal;color:#000;transform:scaleX(0.9692);-webkit-text-stroke:0.8px #000">James M.</div>
<div class="t" style="left:875.00px;top:749.22px;font-size:37.36px;font-weight:normal;color:#000;transform:scaleX(1.0000);-webkit-text-stroke:0.8px #000">23</div>
<div class="t" style="left:1158.23px;top:749.22px;font-size:37.36px;font-weight:normal;color:#000;transform:scaleX(1.0218);-webkit-text-stroke:0.8px #000">Nursing</div>
<div class="t" style="left:149.64px;top:804.67px;font-size:37.36px;font-weight:normal;color:#000;transform:scaleX(0.9568);-webkit-text-stroke:0.8px #000">ST348-251</div>
<div class="t" style="left:497.68px;top:804.67px;font-size:37.36px;font-weight:normal;color:#000;transform:scaleX(1.0176);-webkit-text-stroke:0.8px #000">Smith F.</div>
<div class="t" style="left:875.00px;top:804.67px;font-size:37.36px;font-weight:normal;color:#000;transform:scaleX(1.0000);-webkit-text-stroke:0.8px #000">26</div>
<div class="t" style="left:1150.90px;top:804.67px;font-size:37.36px;font-weight:normal;color:#000;transform:scaleX(0.9655);-webkit-text-stroke:0.8px #000">Business</div>
<div class="t" style="left:149.64px;top:860.12px;font-size:37.36px;font-weight:normal;color:#000;transform:scaleX(0.9568);-webkit-text-stroke:0.8px #000">ST348-247</div>
<div class="t" style="left:454.90px;top:860.12px;font-size:37.36px;font-weight:normal;color:#000;transform:scaleX(0.9942);-webkit-text-stroke:0.8px #000">Thompson G.</div>
<div class="t" style="left:875.00px;top:860.12px;font-size:37.36px;font-weight:normal;color:#000;transform:scaleX(1.0000);-webkit-text-stroke:0.8px #000">26</div>
<div class="t" style="left:1150.90px;top:860.12px;font-size:37.36px;font-weight:normal;color:#000;transform:scaleX(0.9655);-webkit-text-stroke:0.8px #000">Business</div>
<div class="t" style="left:149.64px;top:915.57px;font-size:37.36px;font-weight:normal;color:#000;transform:scaleX(0.9568);-webkit-text-stroke:0.8px #000">ST348-249</div>
<div class="t" style="left:469.28px;top:915.57px;font-size:37.36px;font-weight:normal;color:#000;transform:scaleX(1.0064);-webkit-text-stroke:0.8px #000">Peterson A.</div>
<div class="t" style="left:875.00px;top:915.57px;font-size:37.36px;font-weight:normal;color:#000;transform:scaleX(1.0000);-webkit-text-stroke:0.8px #000">37</div>
<div class="t" style="left:1160.34px;top:915.57px;font-size:37.36px;font-weight:normal;color:#000;transform:scaleX(0.9611);-webkit-text-stroke:0.8px #000">Science</div>
<div class="t" style="left:469.10px;top:304.86px;font-size:38.66px;font-weight:bold;color:#000;transform:scaleX(0.9492);">Online Enrollment 2014 - 2015</div></body></html>
